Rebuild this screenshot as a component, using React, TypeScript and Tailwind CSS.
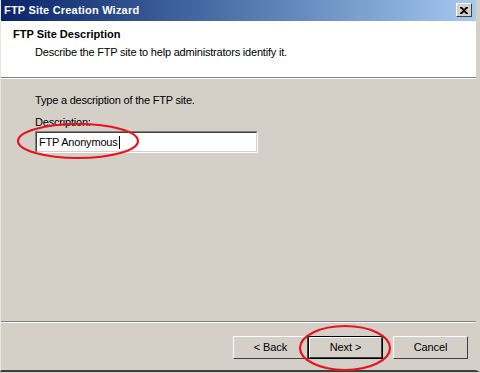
const face = "font-['Liberation_Sans',Arial,sans-serif]"

function CloseButton() {
  return (
    <div className="absolute right-[4px] top-[3px] w-[16px] h-[14px] bg-[#d4d0c8] border border-t-white border-l-white border-r-[#404040] border-b-[#404040] flex items-center justify-center">
      <svg width="8" height="7" viewBox="0 0 8 7">
        <path d="M0 0h2l2 2 2-2h2v1L5 3.5 8 6v1H6L4 5 2 7H0V6l3-2.5L0 1z" fill="#000" />
      </svg>
    </div>
  )
}

function WinButton({ label, isDefault }: { label: string; isDefault?: boolean }) {
  return (
    <div className={`w-[75px] h-[23px] bg-[#d4d0c8] ${isDefault ? "border border-black" : ""}`}>
      <div className="w-full h-full border border-t-white border-l-white border-r-[#404040] border-b-[#404040] flex items-center justify-center">
        <span className="text-[11px] text-black tracking-[-0.1px]">{label}</span>
      </div>
    </div>
  )
}

export default function App() {
  return (
    <div className={`relative w-[480px] h-[373px] overflow-hidden bg-[#d4d0c8] ${face} text-[11px] text-black`}>
      <div className="flex flex-col h-[372px] border-l border-l-[#e8e6e0] border-r-4 border-r-[#d4d0c8] border-b-2 border-b-[#404040]">
        {/* title bar */}
        <div className="relative h-[21px] shrink-0 bg-gradient-to-r from-[#0a246a] to-[#a6caf0] flex items-center pl-[3px]">
          <span className="text-white font-bold text-[11px] tracking-[0.2px]">FTP Site Creation Wizard</span>
          <CloseButton />
        </div>

        {/* header */}
        <div className="h-[57px] shrink-0 bg-white pl-[12px] pt-[6px] border-b border-b-[#808080]">
          <div className="font-bold leading-[14px]">FTP Site Description</div>
          <div className="pl-[22px] mt-[4px] leading-[14px] tracking-[-0.2px]">Describe the FTP site to help administrators identify it.</div>
        </div>
        <div className="h-px bg-white shrink-0" />

        {/* body */}
        <div className="flex-1 flex flex-col pl-[34px] pt-[14px] tracking-[-0.2px]">
          <div className="leading-[14px]">Type a description of the FTP site.</div>
          <div className="mt-[8px] leading-[14px]">Description:</div>
          <div className="mt-[2px] w-[223px] h-[22px] bg-white border border-t-[#808080] border-l-[#808080] border-r-white border-b-white">
            <div className="w-full h-full border border-t-[#404040] border-l-[#404040] border-r-[#d4d0c8] border-b-[#d4d0c8] flex items-center pl-[2px]">
              <span>FTP Anonymous</span>
              <span className="w-px h-[13px] bg-black ml-[1px]" />
            </div>
          </div>
        </div>

        {/* separator + buttons */}
        <div className="shrink-0 h-px bg-[#808080]" />
        <div className="shrink-0 h-px bg-white" />
        <div className="shrink-0 h-[47px] flex items-start justify-end pt-[13px] pr-[8px]">
          <WinButton label="< Back" />
          <WinButton label="Next >" isDefault />
          <div className="w-[10px]" />
          <WinButton label="Cancel" />
        </div>
      </div>

      {/* red annotation ellipses */}
      <svg className="absolute left-0 top-0 pointer-events-none" width="480" height="373">
        <ellipse cx="78" cy="141" rx="60" ry="17" fill="none" stroke="#e8141c" strokeWidth="2.2" />
        <ellipse cx="345" cy="348" rx="45" ry="22" fill="none" stroke="#e8141c" strokeWidth="2.2" />
      </svg>
    </div>
  )
}
